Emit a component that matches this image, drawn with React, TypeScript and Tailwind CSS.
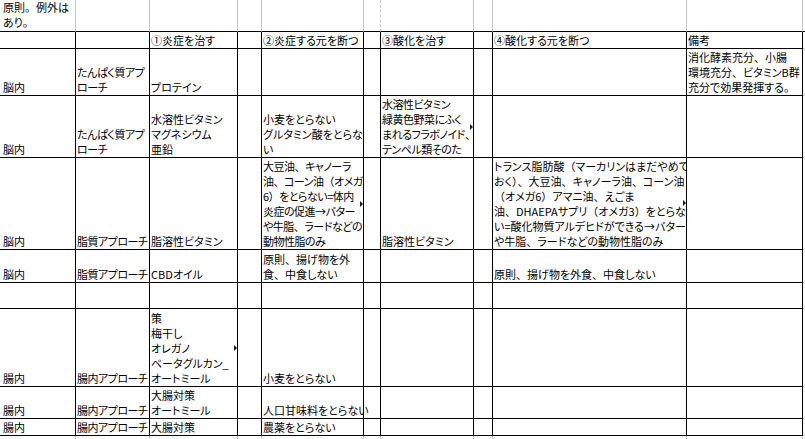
import React from "react";

type C = { l?: string[]; tri?: number; vis?: boolean; top?: boolean; tight?: boolean } | null;
const E: C = null;

const rows: C[][] = [
  [{ l: ["原則。例外は", "あり。"], top: true }, E, E, E, E, E, E, E, E, E, E],
  [E, E, { l: ["①炎症を治す"] }, E, { l: ["②炎症する元を断つ"] }, E, { l: ["③酸化を治す"] }, E, { l: ["④酸化する元を断つ"] }, { l: ["備考"] }, E],
  [
    { l: ["脳内"] },
    { l: ["たんぱく質アプ", "ローチ"] },
    { l: ["プロテイン"] },
    E, E, E, E, E, E,
    { l: ["消化酵素充分、小腸", "環境充分、ビタミンB群", "充分で効果発揮する。"] },
    E,
  ],
  [
    { l: ["脳内"] },
    { l: ["たんぱく質アプ", "ローチ"] },
    { l: ["水溶性ビタミン", "マグネシウム", "亜鉛"] },
    E,
    { l: ["小麦をとらない", "グルタミン酸をとらな", "い"] },
    E,
    { l: ["水溶性ビタミン", "緑黄色野菜にふく", "まれるフラボノイド、", "テンペル類そのた"], tri: 28, tight: true },
    E, E, E, E,
  ],
  [
    { l: ["脳内"] },
    { l: ["脂質アプローチ"] },
    { l: ["脂溶性ビタミン"] },
    E,
    {
      l: ["大豆油、キャノーラ", "油、コーン油（オメガ", "6）をとらない=体内", "炎症の促進→バター", "や牛脂、ラードなどの", "動物性脂のみ"],
      tri: 43,
      tight: true,
    },
    E,
    { l: ["脂溶性ビタミン"] },
    E,
    {
      l: [
        "トランス脂肪酸（マーカリンはまだやめて",
        "おく）、大豆油、キャノーラ油、コーン油",
        "（オメガ6）アマニ油、えごま",
        "油、DHAEPAサプリ（オメガ3）をとらな",
        "い=酸化物質アルデヒドができる→バター",
        "や牛脂、ラードなどの動物性脂のみ",
      ],
      tri: 42,
    },
    E, E,
  ],
  [
    { l: ["脳内"] },
    { l: ["脂質アプローチ"] },
    { l: ["CBDオイル"] },
    E,
    { l: ["原則、揚げ物を外", "食、中食しない"] },
    E, E, E,
    { l: ["原則、揚げ物を外食、中食しない"] },
    E, E,
  ],
  [E, E, E, E, E, E, E, E, E, E, E],
  [
    { l: ["腸内"] },
    { l: ["腸内アプローチ"] },
    { l: ["策", "梅干し", "オレガノ", "ベータグルカン_", "オートミール"], tri: 36 },
    E,
    { l: ["小麦をとらない"] },
    E, E, E, E, E, E,
  ],
  [
    { l: ["腸内"] },
    { l: ["腸内アプローチ"] },
    { l: ["大腸対策", "オートミール"] },
    E,
    { l: ["人口甘味料をとらない"], vis: true },
    E, E, E, E, E, E,
  ],
  [
    { l: ["腸内"] },
    { l: ["腸内アプローチ"] },
    { l: ["大腸対策"] },
    E,
    { l: ["農薬をとらない"] },
    E, E, E, E, E, E,
  ],
  [E, E, E, E, E, E, E, E, E, E, E],
];

function borderClass(r: number, c: number): string {
  if (r === 0) {
    if (c === 10) return "border-b border-b-black";
    if (c === 5) return "border-r border-b border-r-[#c6c6c6] border-b-black [border-right-style:dashed]";
    return "border-r border-b border-r-[#c6c6c6] border-b-black";
  }
  if (r === 10) {
    if (c === 10) return "";
    return "border-r border-r-[#c6c6c6]";
  }
  if (c === 10) return "border-b border-b-[#c6c6c6]";
  return "border-r border-b border-black";
}

function Tri({ top }: { top: number }) {
  return (
    <svg className="absolute right-0" style={{ top }} width="3" height="6" viewBox="0 0 3 6">
      <path d="M0 0 L3 3 L0 6 Z" fill="#2a1414" />
    </svg>
  );
}

function Line({ t }: { t: string }) {
  const parts = t.split(/([、。（）])/).filter((p) => p !== "");
  return (
    <>
      {parts.map((p, i) =>
        /^[、。（）]$/.test(p) ? (
          <span key={i} className="[font-feature-settings:normal]">
            {p}
          </span>
        ) : (
          <span key={i}>{p}</span>
        )
      )}
    </>
  );
}

export default function App() {
  return (
    <div className="w-[805px] h-[439px] overflow-hidden bg-white text-black font-['Noto_Sans_CJK_JP','Noto_Sans_CJK_SC',sans-serif] text-[11px] leading-[15px] [font-feature-settings:'palt']">
      <div className="grid grid-cols-[76px_74px_88px_24px_102px_17px_93px_19px_194px_116px_2px] grid-rows-[32px_17px_47px_62px_92px_33px_26px_78px_32px_17px_4px]">
        {rows.map((row, r) =>
          row.map((cell, c) => (
            <div
              key={`${r}-${c}`}
              className={`relative box-border ${borderClass(r, c)} ${
                cell && cell.vis ? "overflow-visible z-10" : "overflow-hidden"
              } flex flex-col ${cell && cell.top ? "justify-start" : "justify-end"} ${
                c === 0
                  ? "pl-[3px]"
                  : c === 1 || (cell && cell.tight)
                  ? "pl-[1px] tracking-[-0.5px]"
                  : "pl-[1px]"
              }`}
            >
              {cell && cell.l
                ? cell.l.map((t, i) => (
                    <div key={i} className="whitespace-nowrap shrink-0">
                      <Line t={t} />
                    </div>
                  ))
                : null}
              {cell && cell.tri !== undefined ? <Tri top={cell.tri} /> : null}
            </div>
          ))
        )}
      </div>
    </div>
  );
}
